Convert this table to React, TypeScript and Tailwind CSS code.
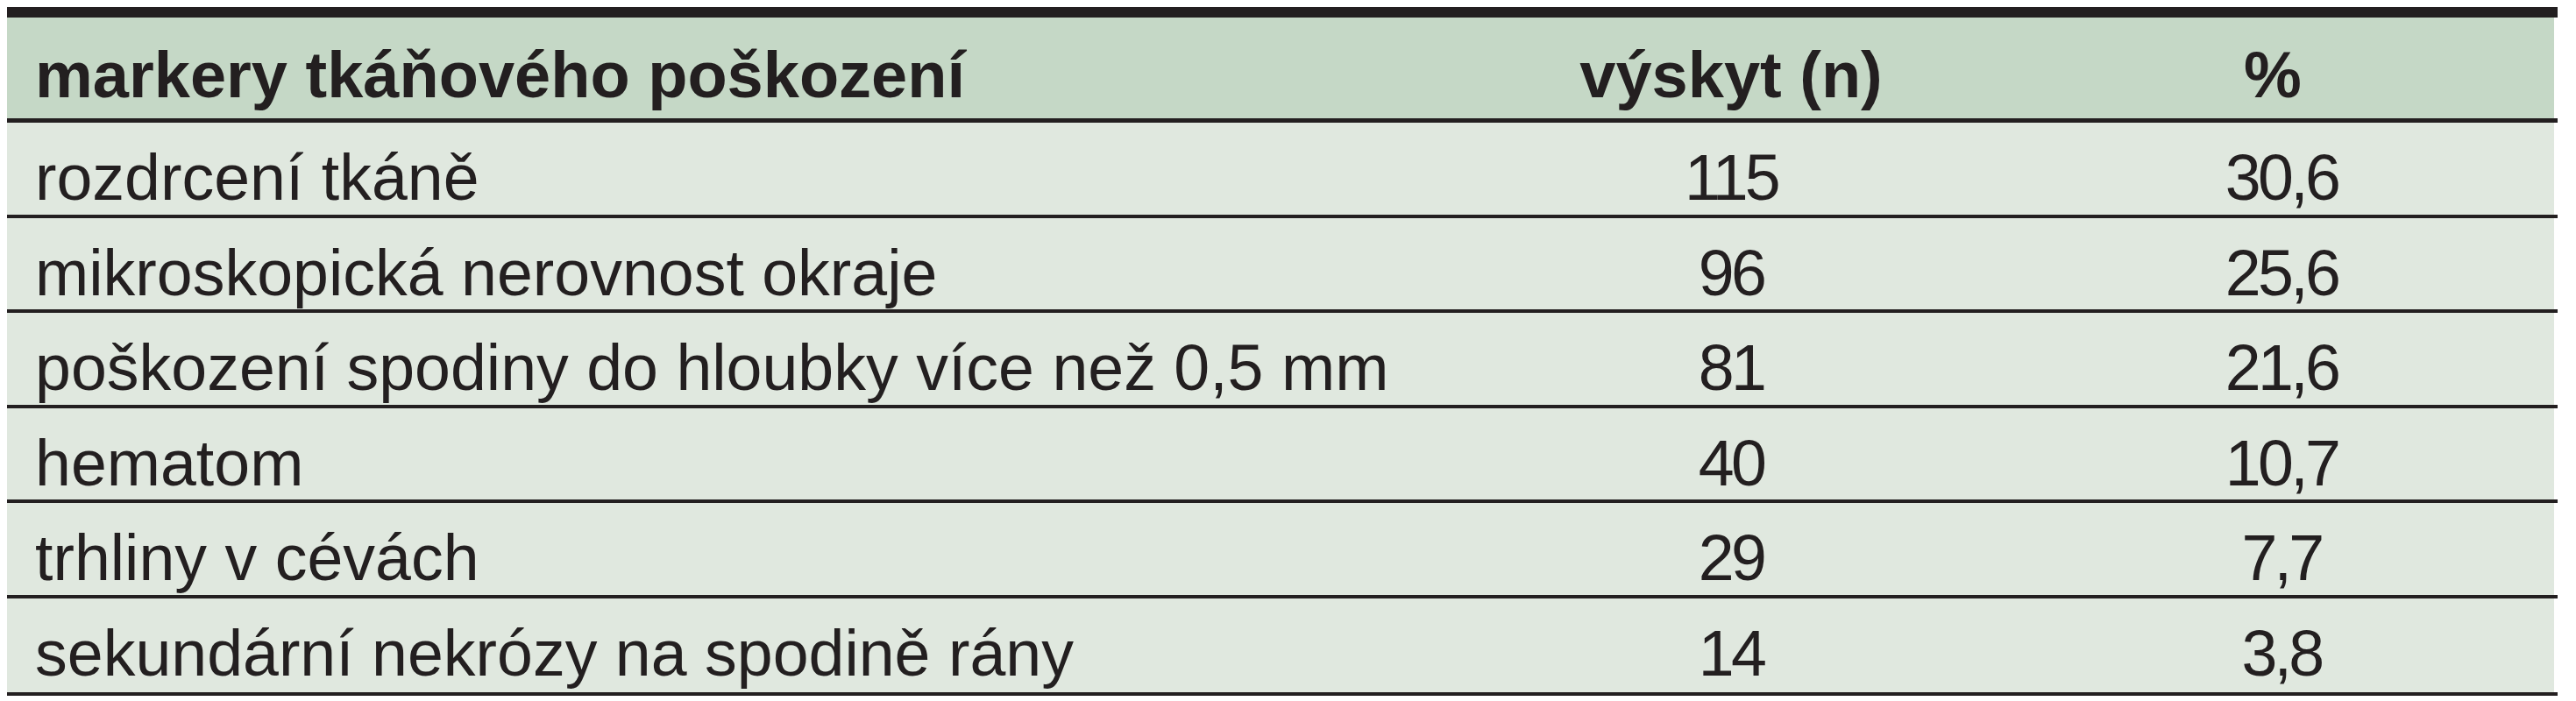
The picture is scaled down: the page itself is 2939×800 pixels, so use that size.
const rows = [
  { label: "rozdrcení tkáně", n: "115", pct: "30,6" },
  { label: "mikroskopická nerovnost okraje", n: "96", pct: "25,6" },
  { label: "poškození spodiny do hloubky více než 0,5 mm", n: "81", pct: "21,6" },
  { label: "hematom", n: "40", pct: "10,7" },
  { label: "trhliny v cévách", n: "29", pct: "7,7" },
  { label: "sekundární nekrózy na spodině rány", n: "14", pct: "3,8" },
];

const cols = "grid grid-cols-[1650px_634px_1fr] items-center";

export default function App() {
  return (
    <div className="min-h-[800px] bg-white pt-[8px] text-[#231f20] [font-family:'Liberation_Sans',Arial,sans-serif]">
      <div className="ml-[8px] w-[2910px]">
        <div className="h-[12px] bg-[#231f20]" />
        <div className={`${cols} mr-[4px] h-[115px] bg-[#c5d8c6] pt-[10px] text-[74px] font-bold`}>
          <div className="pl-[32px]">markery tkáňového poškození</div>
          <div className="text-center">výskyt (n)</div>
          <div className="pr-[20px] text-center">%</div>
        </div>
        <div className="h-[5px] bg-[#231f20]" />

        {rows.map((row, i) => (
          <div key={row.label}>
            <div
              className={`${cols} mr-[4px] bg-[#e0e8df] pt-[8px] text-[73.5px] ${
                i === rows.length - 1 ? "h-[107px]" : "h-[104.5px]"
              }`}
            >
              <div className="pl-[32px] whitespace-nowrap">{row.label}</div>
              <div className="text-center tracking-[-0.05em]">{row.n}</div>
              <div className="text-center tracking-[-0.05em]">{row.pct}</div>
            </div>
            <div className="h-[4px] bg-[#231f20]" />
          </div>
        ))}
      </div>
    </div>
  );
}
